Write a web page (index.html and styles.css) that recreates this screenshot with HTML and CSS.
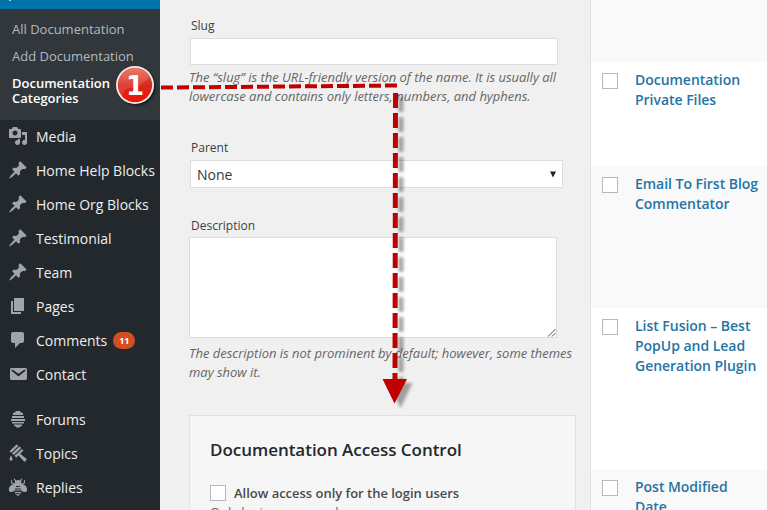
FILE: index.html
```html
<!DOCTYPE html>
<html lang="en">
<head>
<meta charset="utf-8">
<title>Documentation Categories</title>
<link rel="stylesheet" href="styles.css">
</head>
<body>
<svg class="defs" width="0" height="0">
  <symbol id="pin" viewBox="0 0 20 20"><path d="M10.44 3.02l1.82-1.82 6.36 6.35-1.83 1.82c-1.05-.68-2.48-.57-3.41.36l-.75.75c-.92.93-1.04 2.35-.35 3.41l-1.83 1.82-2.41-2.41-2.8 2.79c-.42.42-3.38 2.71-3.8 2.29s1.86-3.39 2.28-3.81l2.79-2.79L4.1 9.36l1.83-1.82c1.05.69 2.48.57 3.4-.36l.75-.75c.93-.92 1.05-2.35.36-3.41z"/></symbol>
</svg>
<div class="app">
  <nav class="sidebar">
    <div class="current"><i></i></div>
    <ul class="submenu">
      <li>All Documentation</li>
      <li>Add Documentation</li>
      <li class="active">Documentation<br>Categories</li>
    </ul>
    <ul class="menu">
      <li><svg viewBox="0 0 20 20"><path d="M13 11V4c0-.55-.45-1-1-1h-1.67L9 1H5L3.67 3H2c-.55 0-1 .45-1 1v7c0 .55.45 1 1 1h10c.55 0 1-.45 1-1zM7 4.5c1.38 0 2.5 1.12 2.5 2.5S8.38 9.5 7 9.5 4.5 8.38 4.5 7 5.62 4.5 7 4.5zM14 6h5v10.5c0 1.38-1.12 2.5-2.5 2.5S14 17.88 14 16.5s1.12-2.5 2.5-2.5c.17 0 .34.02.5.05V9h-3V6zm-4 8.05V13h2v3.5c0 1.38-1.12 2.5-2.5 2.5S7 17.88 7 16.5 8.12 14 9.5 14c.17 0 .34.02.5.05z"/></svg><span>Media</span></li>
      <li><svg><use href="#pin"/></svg><span>Home Help Blocks</span></li>
      <li><svg><use href="#pin"/></svg><span>Home Org Blocks</span></li>
      <li><svg><use href="#pin"/></svg><span>Testimonial</span></li>
      <li><svg><use href="#pin"/></svg><span>Team</span></li>
      <li><svg viewBox="0 0 20 20"><path d="M6 15V2h10v13H6zm-1 1h8v2H3V5h2v11z"/></svg><span>Pages</span></li>
      <li><svg viewBox="0 0 20 20"><path d="M5 2h9c1.100 0 2 .9 2 2v7c0 1.100-.9 2-2 2h-2l-5 5v-5H5c-1.100 0-2-.9-2-2V4c0-1.100.9-2 2-2z"/></svg><span>Comments</span><b class="count">11</b></li>
      <li><svg viewBox="0 0 20 20"><path d="M3.87 4h13.25C18.37 4 19 4.59 19 5.79v8.42c0 1.19-.63 1.79-1.88 1.79H3.87c-1.25 0-1.88-.6-1.88-1.79V5.79c0-1.2.63-1.79 1.88-1.79zm6.62 8.6l6.74-5.53c.24-.2.43-.66.13-1.07-.29-.41-.82-.42-1.17-.17l-5.7 3.86L4.8 5.83c-.35-.25-.88-.24-1.17.17-.3.41-.11.87.13 1.07z"/></svg><span>Contact</span></li>
      <li class="gap"><svg viewBox="0 0 20 20"><path d="M8 2h4l1 1.500 2 .4V6H5V3.900l2-.4zM4 7h12v2H4zM3 10h14v2H3zM4 13h12v1.500H4zM6 15.500h8V17l-2 .4-.5 1.100h-3L8 17.400 6 17z"/></svg><span>Forums</span></li>
      <li><svg viewBox="0 0 20 20"><path d="M8.500 1.500l2 1.200-7.200 7.100-1.800-1.500zM11.300 3.600l1.900 1.300-7.300 7.200-1.800-1.600zM14 6l1.500 1.600-7.300 7.200-1.600-2zM12.200 10.800l6.800 5.500-2.500 2.700-6-6.500zM3 12.300l1.400 3.100c.8 3-3.500 3-2.800 0z"/></svg><span>Topics</span></li>
      <li><svg viewBox="0 0 20 20"><path d="M7 4.500L5.800 2l.8-.5L8 3.500a4 4 0 0 1 4 0l1.400-2 .8.500L13 4.500l.6 2.200 2-.7.5-3.200.9.200-.3 3.700-2.500 1.200c3.500-.5 5.500 3 4.800 6.100-1.200 2-4 1-5.400-.500H6.400C5 15 2.200 16 1 14c-.7-3.100 1.300-6.600 4.800-6.100L3.300 6.700 3 3l.9-.2.500 3.200 2 .7z"/><path d="M6.700 14h6.600c0 2.200-1.200 3.800-3.300 5-2.100-1.200-3.300-2.800-3.300-5z"/><path class="cut" d="M8 9.500h4M7 12h6M7 14.500h6M8 16.700h4M8.400 5h.1M11.500 5h.1"/></svg><span>Replies</span></li>
    </ul>
  </nav>

  <main class="form">
    <label class="lbl">Slug</label>
    <div class="input"></div>
    <p class="hint">The “slug” is the URL-friendly version of the name. It is usually all<br>lowercase and contains only letters, numbers, and hyphens.</p>
    <label class="lbl parent-l">Parent</label>
    <div class="select"><span>None</span><svg width="6" height="7"><path d="M0 .5h6L3 6.500z"/></svg></div>
    <label class="lbl desc-l">Description</label>
    <div class="textarea"><svg width="9" height="9"><path d="M1 8.500L8.500 1M5 8.500L8.500 5"/></svg></div>
    <p class="hint second">The description is not prominent by default; however, some themes<br>may show it.</p>
    <section class="box">
      <h2>Documentation Access Control</h2>
      <div class="check"><i class="cb"></i><span>Allow access only for the login users</span></div>
      <p>Only login users can have access</p>
    </section>
  </main>

  <section class="list">
    <div class="row r0"></div>
    <div class="row r1"><i class="cb"></i><a>Documentation<br>Private Files</a></div>
    <div class="row r2"><i class="cb"></i><a>Email To First Blog<br>Commentator</a></div>
    <div class="row r3"><i class="cb"></i><a>List Fusion – Best<br>PopUp and Lead<br>Generation Plugin</a></div>
    <div class="row r4"><i class="cb"></i><a>Post Modified<br>Date</a></div>
  </section>
</div>

<svg class="notes" width="767" height="510" viewBox="0 0 767 510">
  <defs>
    <filter id="soft" filterUnits="userSpaceOnUse" x="0" y="0" width="767" height="510"><feGaussianBlur stdDeviation="1.600"/></filter>
    <linearGradient id="red" x1="0" y1="0" x2="0" y2="1"><stop offset="0" stop-color="#e8694f"/><stop offset=".5" stop-color="#d8281c"/><stop offset="1" stop-color="#ee1408"/></linearGradient>
  </defs>
  <g filter="url(#soft)" opacity=".42" transform="translate(5.500 4)">
    <path d="M395.500 93V379" stroke="#333" stroke-width="5" stroke-dasharray="15 5"/>
    <path d="M383 379h24l-12 25z" fill="#333"/>
  </g>
  <path d="M161 87.600L397 85.500" stroke="#c00000" stroke-width="4" stroke-dasharray="12 4"/>
  <path d="M395.500 93L395 379" stroke="#c00000" stroke-width="5" stroke-dasharray="15 5"/>
  <path d="M382.500 379h24.500L394.500 403.500z" fill="#c00000"/>
  <circle cx="137" cy="87" r="18.500" fill="#000" opacity=".55" filter="url(#soft)"/>
  <circle cx="135" cy="85" r="19" fill="#f4eeee"/>
  <circle cx="135" cy="85" r="17.200" fill="url(#red)"/>
  <path d="M118.500 88a17 17 0 0 1 31-12q-8 12-19 12c-6 0-8 4-8 9q-3-4-4-9z" fill="#fff" opacity=".13"/>
  <text class="one" x="135" y="95" text-anchor="middle">1</text>
</svg>
</body>
</html>
```
FILE: styles.css
```css
* { box-sizing: border-box; }
body { margin: 0; font-family: "Open Sans", sans-serif; width: 767px; height: 510px; overflow: hidden; position: relative; background: #f0f0f0; }
ul, p, h2 { margin: 0; padding: 0; list-style: none; }
.defs { position: absolute; }
.app { display: flex; height: 510px; overflow: hidden; }

.sidebar { width: 160px; flex: none; background: #23282d; }
.current { height: 9px; background: #0073aa; padding-left: 9px; }
.current i { display: block; width: 2px; height: 1px; background: #b5d6e6; }
.submenu { height: 111px; background: #32373c; padding: 7px 12px 0; font-size: 13px; color: #b4b9be; }
.submenu li { height: 27px; line-height: 27px; white-space: nowrap; }
.submenu .active { color: #fff; font-weight: 600; line-height: 15px; padding-top: 6px; }
.menu { margin-top: -1px; }
.menu li { height: 34px; display: flex; align-items: center; padding-left: 8px; color: #eee; font-size: 14px; white-space: nowrap; }
.menu li.gap { margin-top: 11px; }
.menu svg { width: 20px; height: 20px; margin-right: 8px; fill: #a0a5aa; flex: none; }
.menu .cut { stroke: #23282d; stroke-width: 1; fill: none; }
.count { margin-left: 6px; min-width: 22px; height: 17px; line-height: 17px; border-radius: 9px; background: #d54e21; color: #fff; font-size: 9px; text-align: center; }

.form { width: 430px; flex: none; padding: 17px 0 0 29px; background: #f0f0f0; }
.lbl { display: block; font-size: 12px; line-height: 18px; color: #3a3f44; padding-left: 2px; }
.input { width: 368px; height: 27px; margin: 3px 0 0 1px; background: #fff; border: 1px solid #ddd; }
.hint { font-size: 13px; line-height: 19px; letter-spacing: -.012px; font-style: italic; color: #666; margin-top: 3px; white-space: nowrap; }
.parent-l { margin-top: 33px; }
.select { width: 373px; height: 28px; margin: 3px 0 0 1px; background: #fff; border: 1px solid #ddd; display: flex; align-items: center; justify-content: space-between; padding: 0 6px; font-size: 14px; color: #32373c; }
.select svg { fill: #222; }
.desc-l { margin-top: 29px; }
.textarea { width: 368px; height: 101px; margin-top: 2px; background: #fff; border: 1px solid #ddd; display: flex; justify-content: flex-end; align-items: flex-end; }
.textarea svg { stroke: #555; fill: none; stroke-width: 1; }
.hint.second { margin-top: 6px; }
.box { width: 387px; height: 120px; margin-top: 33px; border: 1px solid #e1e1e1; background: #f7f6f6; padding: 22px 20px 0; white-space: nowrap; overflow: hidden; }
.box h2 { font-size: 17px; line-height: 24px; letter-spacing: -.03px; font-weight: 600; color: #23282d; }
.check { display: flex; align-items: center; gap: 8px; margin-top: 21px; height: 20px; font-size: 13px; font-weight: 600; letter-spacing: -.02px; color: #4a4a4a; }
.box p { font-size: 13px; line-height: 18px; color: #666; }
.cb { width: 16px; height: 16px; flex: none; border: 1px solid #b4b9be; background: #fff; }

.list { width: 177px; border-left: 1px solid #e1e1e1; background: #fff; }
.row { display: flex; align-items: flex-start; gap: 17px; padding: 8px 0 0 11px; font-size: 14px; line-height: 20px; font-weight: 600; letter-spacing: -.03px; color: #2474a5; white-space: nowrap; overflow: hidden; }
.row .cb { margin-top: 3px; }
.r0, .r2, .r4 { background: #f9f9f9; }
.r0 { height: 62px; }
.r1 { height: 104px; }
.r2 { height: 142px; }
.r3 { height: 161px; }
.r4 { height: 60px; }

.notes { position: absolute; left: 0; top: 0; }
.one { font: bold 26px "DejaVu Sans", sans-serif; fill: #fff; }
```
